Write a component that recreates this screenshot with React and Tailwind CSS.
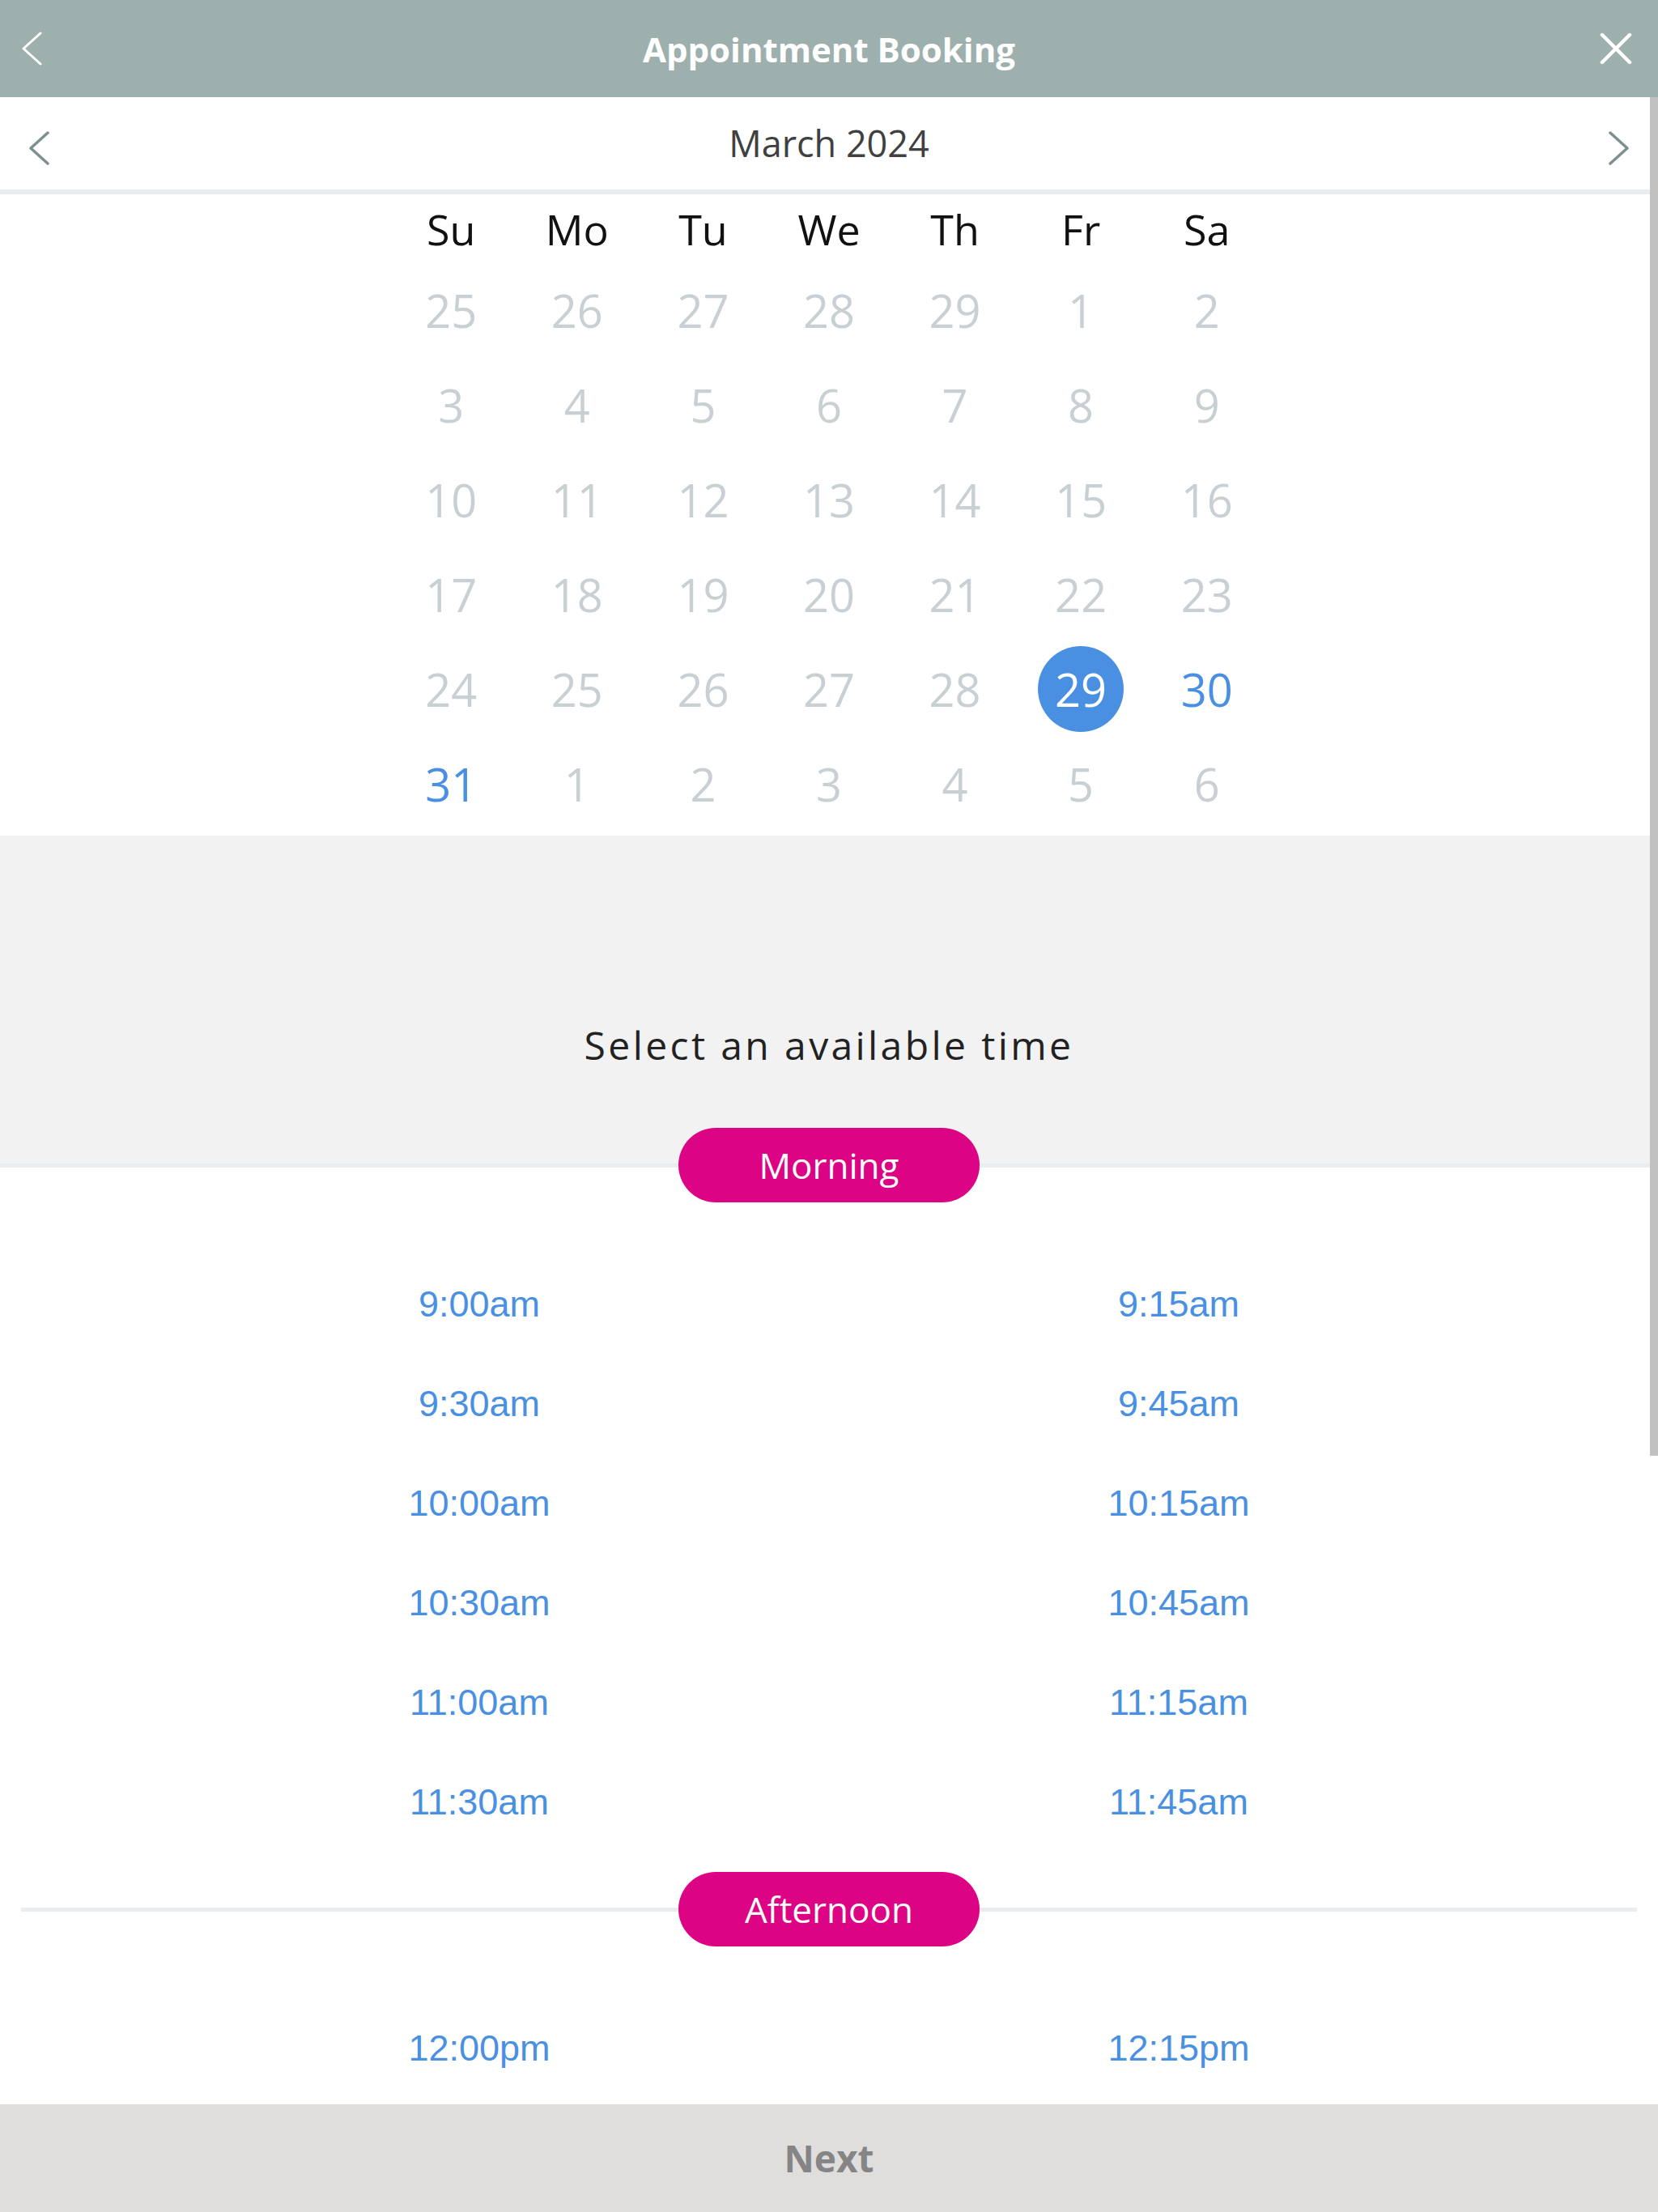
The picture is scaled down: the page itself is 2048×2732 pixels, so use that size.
import React from "react";

const WEEKDAYS = ["Su", "Mo", "Tu", "We", "Th", "Fr", "Sa"];

// state: "off" = unavailable, "open" = available, "sel" = selected
const WEEKS = [
  [25, 26, 27, 28, 29, 1, 2].map((d) => ({ d, s: "off" })),
  [3, 4, 5, 6, 7, 8, 9].map((d) => ({ d, s: "off" })),
  [10, 11, 12, 13, 14, 15, 16].map((d) => ({ d, s: "off" })),
  [17, 18, 19, 20, 21, 22, 23].map((d) => ({ d, s: "off" })),
  [
    { d: 24, s: "off" },
    { d: 25, s: "off" },
    { d: 26, s: "off" },
    { d: 27, s: "off" },
    { d: 28, s: "off" },
    { d: 29, s: "sel" },
    { d: 30, s: "open" },
  ],
  [
    { d: 31, s: "open" },
    { d: 1, s: "off" },
    { d: 2, s: "off" },
    { d: 3, s: "off" },
    { d: 4, s: "off" },
    { d: 5, s: "off" },
    { d: 6, s: "off" },
  ],
];

const MORNING = [
  "9:00am", "9:15am", "9:30am", "9:45am",
  "10:00am", "10:15am", "10:30am", "10:45am",
  "11:00am", "11:15am", "11:30am", "11:45am",
];

const AFTERNOON = ["12:00pm", "12:15pm"];

const Chevron = ({ dir = "left", color, width = 3 }) => (
  <svg width="26" height="42" viewBox="0 0 26 42" fill="none">
    <polyline
      points={dir === "left" ? "23,2 2,21 23,40" : "3,2 24,21 3,40"}
      stroke={color}
      strokeWidth={width}
      strokeLinecap="round"
      strokeLinejoin="round"
    />
  </svg>
);

const DayCell = ({ d, s }) => {
  if (s === "sel") {
    return (
      <div className="h-[117px] flex items-center justify-center">
        <div className="w-[106px] h-[106px] rounded-full bg-[#4a90e2] flex items-center justify-center text-white text-[56px]">
          {d}
        </div>
      </div>
    );
  }
  return (
    <div
      className={
        s === "open"
          ? "h-[117px] flex items-center justify-center text-[56px] text-[#4a90e2]"
          : "h-[117px] flex items-center justify-center text-[56px] text-[#c9d0d4]"
      }
    >
      {d}
    </div>
  );
};

const PeriodDivider = ({ label, split }) => (
  <div
    className={
      split
        ? "flex items-center bg-[linear-gradient(to_bottom,#f2f2f2_50%,#ffffff_50%)]"
        : "flex items-center mx-[26px]"
    }
  >
    <div className="flex-1 h-[5px] bg-[#e9edf0]" />
    <div className="w-[372px] h-[92px] rounded-full bg-[#dc0384] flex items-center justify-center text-white text-[44px]">
      {label}
    </div>
    <div className="flex-1 h-[5px] bg-[#e9edf0]" />
  </div>
);

const TimeGrid = ({ times }) => (
  <div className="w-[1728px] mx-auto grid grid-cols-2 pt-[64px] pb-[25px]">
    {times.map((t) => (
      <button
        key={t}
        className="h-[123px] flex items-center justify-center text-[45px] text-[#4a90e2] font-['Liberation_Sans',Arial,sans-serif]"
      >
        {t}
      </button>
    ))}
  </div>
);

const App = () => {
  return (
    <div className="w-[2048px] h-[2732px] flex flex-col bg-white overflow-hidden font-['Open_Sans',sans-serif]">
      <header className="h-[120px] shrink-0 bg-[#9db0ad] flex items-center">
        <div className="w-[200px] pl-[27px] flex items-center">
          <Chevron dir="left" color="#ffffff" width={3} />
        </div>
        <h1 className="flex-1 text-center text-white font-bold text-[42px]">Appointment Booking</h1>
        <div className="w-[200px] pr-[32px] flex items-center justify-end">
          <svg width="40" height="38" viewBox="0 0 40 38" fill="none">
            <path d="M3 2 L37 36 M37 2 L3 36" stroke="#ffffff" strokeWidth="4.5" strokeLinecap="round" />
          </svg>
        </div>
      </header>

      <main className="flex-1 relative overflow-hidden">
        <div className="flex flex-col">
          <div className="h-[120px] shrink-0 flex items-center justify-between px-[36px] border-b-[6px] border-[#e9edf0]">
            <div className="mt-[12px]">
              <Chevron dir="left" color="#7f8f8f" width={3.5} />
            </div>
            <span className="text-[45px] text-[#404040]">March 2024</span>
            <div className="mt-[12px]">
              <Chevron dir="right" color="#7f8f8f" width={3.5} />
            </div>
          </div>

          <div className="pb-[6px]">
            <div className="w-[1089px] mx-auto grid grid-cols-7">
              {WEEKDAYS.map((w) => (
                <div key={w} className="h-[84px] pt-[2px] flex items-center justify-center text-[52px] text-[#111111]">
                  {w}
                </div>
              ))}
              {WEEKS.flat().map((c, i) => (
                <DayCell key={i} d={c.d} s={c.s} />
              ))}
            </div>
          </div>

          <div className="bg-[#f2f2f2] pt-[225px] pb-[69px] text-center">
            <p className="text-[48px] leading-[67px] tracking-[3.4px] text-[#222222]">Select an available time</p>
          </div>

          <PeriodDivider label="Morning" split />
          <TimeGrid times={MORNING} />
          <PeriodDivider label="Afternoon" />
          <TimeGrid times={AFTERNOON} />
        </div>

        <div className="absolute top-0 right-0 w-[10px] h-[1678px] bg-[#c1c1c1]" />
      </main>

      <footer className="h-[133px] shrink-0 bg-[#dfdedd] flex items-center justify-center">
        <span className="text-[46px] font-bold text-[#858585]">Next</span>
      </footer>
    </div>
  );
};

export default App;
